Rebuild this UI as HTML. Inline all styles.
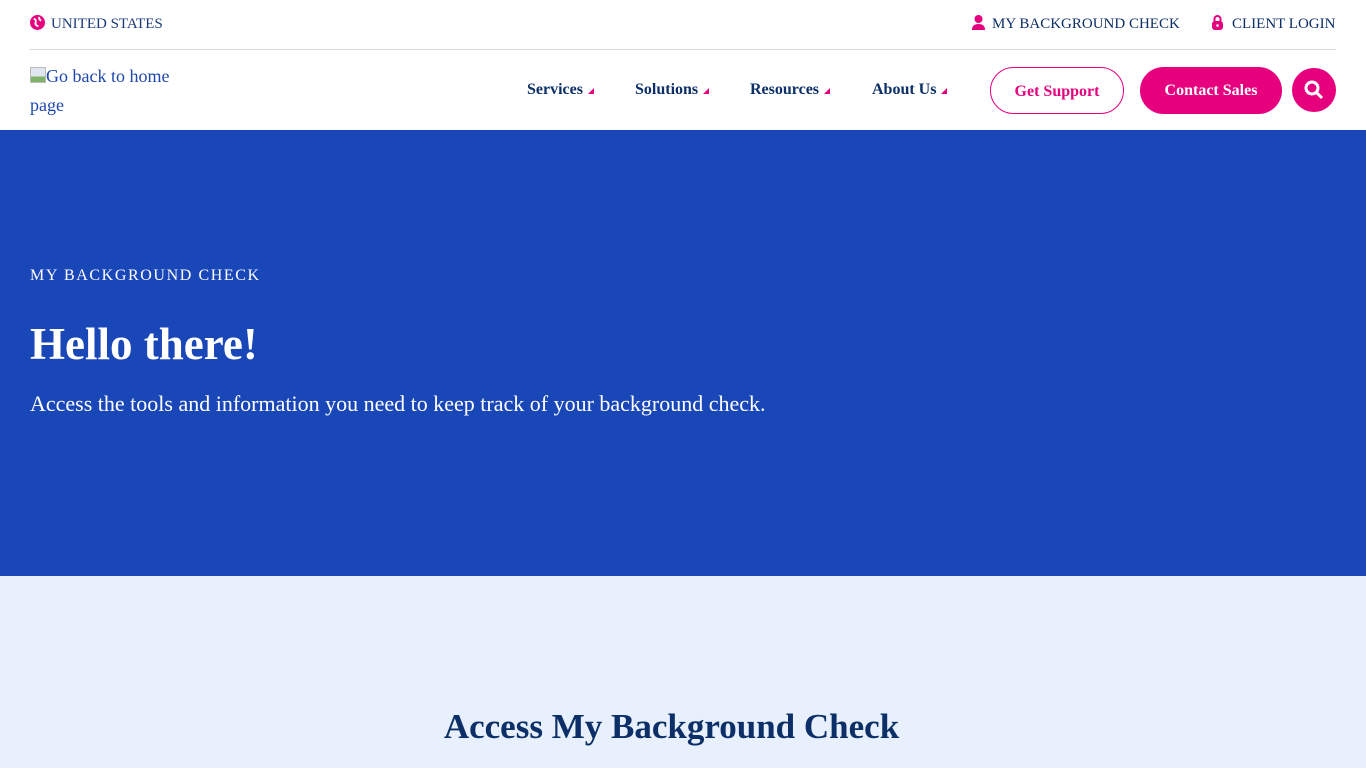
<!DOCTYPE html>
<html><head><style>
body{margin:0;width:1366px;height:768px;overflow:hidden;font-family:"Liberation Serif",serif;background:#fff}
.top{height:49px;margin:0 30px;border-bottom:1px solid #d9d9d9;position:relative;font-size:15px;color:#1a3a7a}
.top span{position:absolute;top:15px}
.logo{position:absolute;left:30px;top:62px;width:160px;color:#1f47ad;font-size:18px;line-height:29px}
.menu{position:absolute;top:81px;font-weight:bold;color:#0b2f66;font-size:16px}
.tri{display:inline-block;width:0;height:0;border-left:6px solid transparent;border-bottom:6px solid #e6007e;margin-left:5px}
.btn{position:absolute;top:67px;height:47px;border-radius:24px;font-weight:bold;font-size:16px;line-height:47px;text-align:center;box-sizing:border-box}
.hero{position:absolute;top:130px;left:0;width:1366px;height:446px;background:#1a47b8;color:#fff}
.sec{position:absolute;top:576px;left:0;width:1366px;height:192px;background:#e7f0fc}
</style></head><body>
<div class="top">
<span style="left:0"><svg width="15" height="15" viewBox="0 0 16 16" style="vertical-align:-2px;margin-right:6px"><circle cx="8" cy="8" r="8" fill="#e6007e"/><path d="M4 4q3 1 2 4t3 4M10 2q-1 3 2 4" stroke="#fff" stroke-width="2" fill="none"/></svg>UNITED STATES</span>
<span style="left:942px;color:#0b2f66"><svg width="13" height="15" viewBox="0 0 13 15" style="vertical-align:-2px;margin-right:7px"><circle cx="6.5" cy="4" r="4" fill="#e6007e"/><path d="M0 15q0-6 6.5-6t6.5 6z" fill="#e6007e"/></svg>MY BACKGROUND CHECK</span>
<span style="left:1182px;color:#0b2f66"><svg width="11" height="15" viewBox="0 0 11 15" style="vertical-align:-2px;margin-right:9px"><path d="M2.5 7V4a3 3 0 016 0v3" stroke="#e6007e" stroke-width="2" fill="none"/><rect x="0" y="6" width="11" height="9" rx="3" fill="#e6007e"/><circle cx="5.5" cy="10.5" r="1.3" fill="#fff"/></svg>CLIENT LOGIN</span>
</div>
<div class="logo"><span style="display:inline-block;width:16px;height:16px;background:linear-gradient(#dfe6f0 60%,#7fb36a 60%);border:1px solid #bbb;box-sizing:border-box;vertical-align:-1px"></span>Go back to home page</div>
<div class="menu" style="left:527px">Services<span class="tri"></span></div>
<div class="menu" style="left:635px">Solutions<span class="tri"></span></div>
<div class="menu" style="left:750px">Resources<span class="tri"></span></div>
<div class="menu" style="left:872px">About Us<span class="tri"></span></div>
<div class="btn" style="left:990px;width:134px;border:1px solid #e6007e;color:#e6007e">Get Support</div>
<div class="btn" style="left:1140px;width:142px;background:#e6007e;color:#fff">Contact Sales</div>
<div class="btn" style="left:1292px;width:44px;height:44px;background:#e6007e;top:68px"><svg width="20" height="20" viewBox="0 0 20 20" style="margin-top:12px"><circle cx="8" cy="8" r="6" stroke="#fff" stroke-width="3" fill="none"/><path d="M12.5 12.5L18 18" stroke="#fff" stroke-width="3"/></svg></div>
<div class="hero">
<div style="position:absolute;left:30px;top:137px;font-size:16px;letter-spacing:1.6px">MY BACKGROUND CHECK</div>
<div style="position:absolute;left:30px;top:188px;font-size:45px;font-weight:bold">Hello there!</div>
<div style="position:absolute;left:30px;top:261px;font-size:22px">Access the tools and information you need to keep track of your background check.</div>
</div>
<div class="sec"><div style="position:absolute;top:131px;left:0;width:1343px;text-align:center;font-size:35px;font-weight:bold;color:#0b2f66">Access My Background Check</div></div>
</body></html>
